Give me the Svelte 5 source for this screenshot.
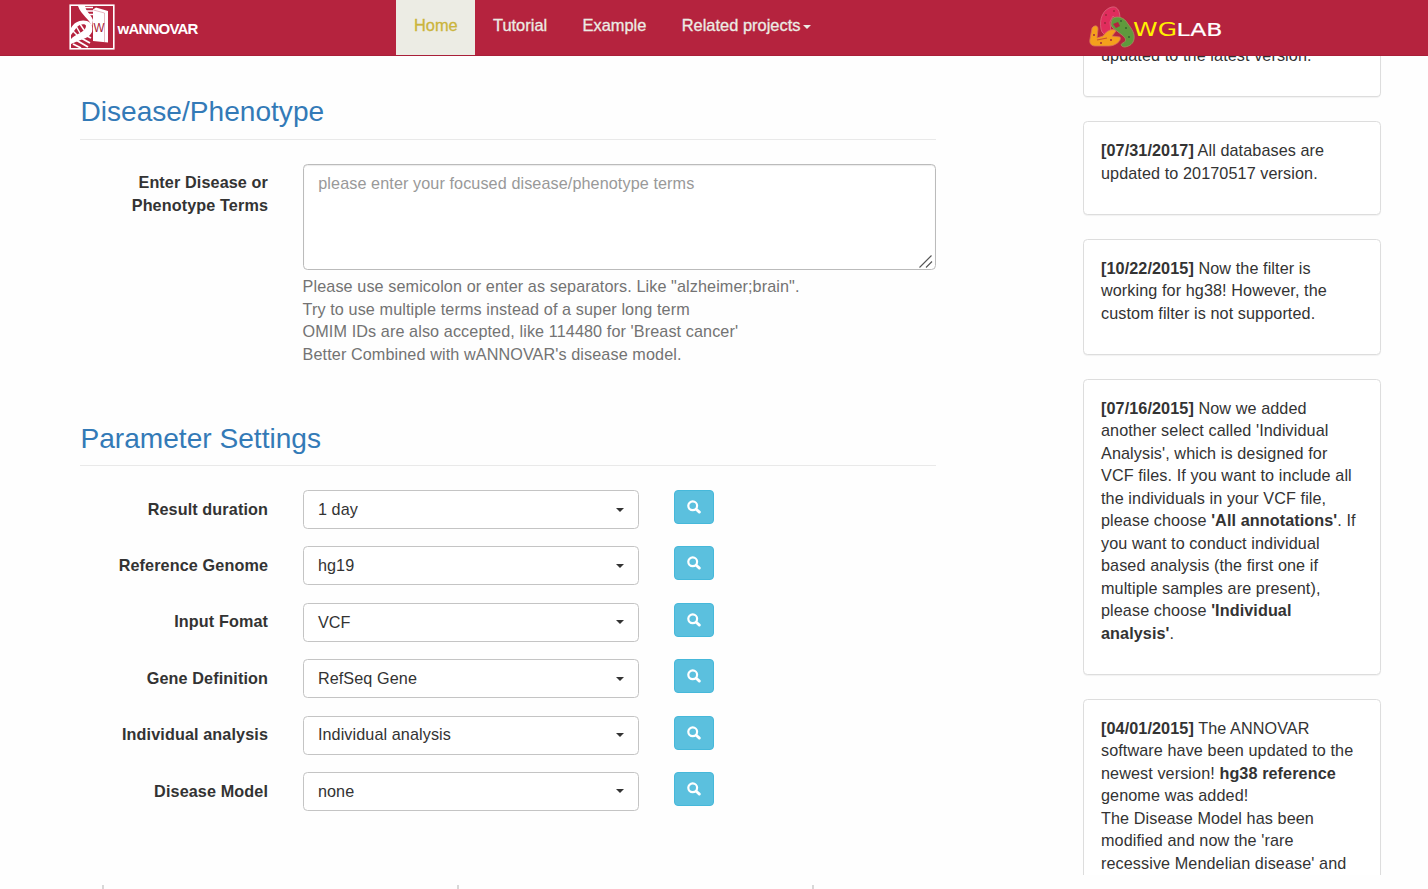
<script>
  const params = [
    { label: 'Result duration', value: '1 day' },
    { label: 'Reference Genome', value: 'hg19' },
    { label: 'Input Fomat', value: 'VCF' },
    { label: 'Gene Definition', value: 'RefSeq Gene' },
    { label: 'Individual analysis', value: 'Individual analysis' },
    { label: 'Disease Model', value: 'none' }
  ];
</script>

<div class="page">
  <nav>
    <a class="brand" href="#home" aria-label="wANNOVAR">
      <svg class="dna" width="46" height="46" viewBox="0 0 46 46">
        <rect x="1.2" y="1.2" width="43.6" height="43.6" fill="none" stroke="#fff" stroke-width="1.6" />
        <path d="M9 2h7c1 6 6 8 8 14l-1 7C21 15 12 11 9 2z" fill="#fff" />
        <path d="M13 3.5h11M15 7h9M18 10.5h6" stroke="#fff" stroke-width="1.4" />
        <path d="M2 24C5 18 12 15 18 17c5 2 6 6 5 11-3 6-9 7-14 9l-7 3v-5c4-5 15-7 15-13 0-3-7-2-9 1l-6 8z" fill="#fff" />
        <path d="M7 22l4 7M11 20l4 6M4 27l4 4" stroke="#fff" stroke-width="1.5" />
        <path d="M7 36l12 7M12 34l9 5M16 31l6 3M4 40l8 4" stroke="#fff" stroke-width="1.9" />
        <path d="M24 5.5l3-2 12 3.500v31.500l-15-1.500z" fill="#fff" />
        <path d="M24.5 6l11 3v29" fill="none" stroke="#d88a99" stroke-width=".6" />
        <text x="24.5" y="27.5" font-size="12" textLength="11" lengthAdjust="spacingAndGlyphs" fill="#a81b38">W</text>
      </svg>
      <span>wANNOVAR</span>
    </a>
    <ul>
      <li class="active">Home</li>
      <li>Tutorial</li>
      <li>Example</li>
      <li>Related projects<i class="caret"></i></li>
    </ul>
    <a class="lab" href="#lab" aria-label="WGLAB">
      <svg width="136" height="44" viewBox="0 0 136 44">
        <path d="M12 25C10 15 14 5 23 3c6-1 8 5 8 12l-3 1-4-4-3 6 1 11-6 2-3-3z" fill="#e02d5d" stroke="#dc6a80" stroke-width=".8" />
        <path d="M3 24c2-3 6-3 6 1l-1 9 6-2c4-6 10-8 13-5l-4 5 8 1c2 4-5 9-11 9H6c-4 0-6-3-5-7z" fill="#f4a01c" stroke="#d9715c" stroke-width=".8" />
        <path d="M8 36l10-2" stroke="#c9522c" stroke-width="1.2" />
        <path d="M24 14c5-2 11-1 15 6 4 5 7 10 6 15-1 5-4 7-9 8-4 0-5-3-2-4 4-2 3-5-1-8l-9-7c-3-2-2-7 0-10z" fill="#5f9a3d" stroke="#a68f62" stroke-width=".8" />
        <path d="M24 20l5-2 2 4-4 2z" fill="#b5233e" />
        <g fill="#9f293b"><circle cx="5" cy="31" r="1" /><circle cx="12" cy="39" r="1" /><circle cx="22" cy="36" r="1" /><circle cx="25" cy="7" r="1" /><circle cx="17" cy="11" r="1" /><circle cx="16" cy="19" r="1" /></g>
        <g fill="#35632f"><circle cx="32" cy="17" r="1" /><circle cx="37" cy="24" r="1" /><circle cx="40" cy="33" r="1" /></g>
        <text class="wide" x="44" y="31.5" font-size="20" textLength="44" lengthAdjust="spacingAndGlyphs" fill="#fff200">WG</text>
        <text class="wide" x="87.5" y="31.5" font-size="17" textLength="46" lengthAdjust="spacingAndGlyphs" fill="#fff" stroke="#fff" stroke-width=".2">LAB</text>
      </svg>
    </a>
  </nav>

  <div class="columns">
    <main>
      <section>
        <h2 class="top">Disease/Phenotype</h2>
        <div class="row terms">
          <div class="label">Enter Disease or<br />Phenotype Terms</div>
          <div class="field">
            <div class="textarea">
              please enter your focused disease/phenotype terms
              <svg class="grip" width="14" height="14" viewBox="0 0 14 14"><path d="M.5 13.5l12-12M7 13.5l6-6" stroke="#555" stroke-width="1.1" /></svg>
            </div>
            <p class="help">
              Please use semicolon or enter as separators. Like "alzheimer;brain".<br />
              Try to use multiple terms instead of a super long term<br />
              OMIM IDs are also accepted, like 114480 for 'Breast cancer'<br />
              Better Combined with wANNOVAR's disease model.
            </p>
          </div>
        </div>
      </section>
      <section class="settings">
        <h2>Parameter Settings</h2>
        <div class="params">
          {#each params as p}
            <div class="row param">
              <div class="label">{p.label}</div>
              <div class="select"><span>{p.value}</span><i class="caret"></i></div>
              <button aria-label="Details">
                <svg width="16" height="16" viewBox="0 0 16 16"><circle cx="6.7" cy="6.8" r="4.4" fill="none" stroke="#fff" stroke-width="2.2" /><path d="M10.2 10.2l3.2 2.9" stroke="#fff" stroke-width="2.8" stroke-linecap="round" /></svg>
              </button>
            </div>
          {/each}
        </div>
      </section>
      <div class="ticks"><i></i><i></i><i></i></div>
    </main>

    <aside>
      <article class="first">updated to the latest version.</article>
      <article><b>[07/31/2017]</b> All databases are<br />updated to 20170517 version.</article>
      <article><b>[10/22/2015]</b> Now the filter is<br />working for hg38! However, the<br />custom filter is not supported.</article>
      <article>
        <b>[07/16/2015]</b> Now we added<br />another select called 'Individual<br />Analysis', which is designed for<br />VCF files. If you want to include all<br />the individuals in your VCF file,<br />please choose <b>'All annotations'</b>. If<br />you want to conduct individual<br />based analysis (the first one if<br />multiple samples are present),<br />please choose <b>'Individual<br />analysis'</b>.
      </article>
      <article class="last">
        <b>[04/01/2015]</b> The ANNOVAR<br />software have been updated to the<br />newest version! <b>hg38 reference</b><br />genome was added!<br />The Disease Model has been<br />modified and now the 'rare<br />recessive Mendelian disease' and
      </article>
    </aside>
  </div>
</div>

<style>
  :global(body) { background: #fefefe; overflow: hidden; }
  .page, .page * { box-sizing: border-box; }
  .page {
    height: 889px; overflow: hidden; display: flex; flex-direction: column;
    font: 16.2px/22.5px "Liberation Sans", Arial, sans-serif; color: #333; background: #fefefe;
    white-space: nowrap; letter-spacing: .09px;
  }
  svg { letter-spacing: 0; }
  nav {
    height: 56px; flex: none; background: #b5233e; display: grid;
    grid-template-columns: 396px 693px 1fr; border-bottom: 1px solid #a91f38;
  }
  .brand { display: flex; align-items: flex-start; padding: 4px 0 0 69px; color: #fff; text-decoration: none; gap: 2.5px; font-weight: 700; font-size: 15px; }
  .brand span { padding-top: 14px; letter-spacing: -.78px; }
  .brand text { font-weight: 400; }
  ul { display: flex; margin: 0; padding: 0; list-style: none; height: 55px; }
  li { padding: 14px 17.4px 0 17.9px; color: #ecece4; font-size: 16.4px; letter-spacing: .02px; -webkit-text-stroke: .3px currentColor; }
  .active { background: #ecece4; color: #cbb43b; }
  .caret { display: inline-block; border: 4.8px solid transparent; border-top-color: currentColor; border-bottom: 0; }
  li .caret { margin-left: 2.5px; border-width: 4.5px 4.5px 0; vertical-align: 2px; }
  .lab { padding-top: 4px; }
  .lab svg { display: block; }
  .wide { font-family: "DejaVu Sans", sans-serif; }
  .columns { display: grid; grid-template-columns: 1082.5px 299px; height: 833px; }
  main { padding: 39px 146.5px 0 80px; display: flex; flex-direction: column; }
  h2 { margin: 0; height: 45px; border-bottom: 1px solid #e9e9e9; font-size: 28.1px; line-height: 35px; font-weight: 400; color: #337ab7; letter-spacing: 0; padding-left: .5px; }
  .top { line-height: 34px; }
  .row { display: grid; grid-template-columns: 188px 1fr; column-gap: 34.6px; }
  .terms { margin-top: 24px; }
  .label { text-align: right; font-weight: 700; padding-top: 7px; letter-spacing: .11px; }
  .textarea { height: 106px; border: 1px solid #bbb; border-radius: 4.5px; padding: 6.5px 14.7px; color: #999; background: #fff; position: relative; box-shadow: inset 0 1px 1px rgba(0,0,0,.08); }
  .grip { position: absolute; right: 2px; bottom: 1px; }
  .help { margin: 5px 0 0; color: #737373; letter-spacing: .1px; }
  .settings { margin-top: 56px; }
  .params { margin-top: 24px; }
  .param { grid-template-columns: 188px 336px 40px; column-gap: 34.9px; height: 56.4px; }
  .param .label { padding-top: 7.6px; }
  .select { height: 39px; border: 1px solid #c4c4c4; border-radius: 4.5px; background: #fff; padding: 0 14px; display: flex; justify-content: space-between; align-items: center; }
  .select span { padding-bottom: .8px; }
  button { width: 40px; height: 34px; border: 1px solid #46b8da; border-radius: 4px; background: #5bc0de; padding: 0; display: grid; place-items: center; }
  .ticks { display: flex; gap: 353px; margin: auto 0 0 22px; height: 4px; }
  .ticks i { width: 2px; height: 4px; background: #d8d8d8; flex: none; }
  aside { display: flex; flex-direction: column; gap: 24px; height: 819px; overflow: hidden; width: 300px; }
  article { width: 298.5px; flex: none; border: 1px solid #ddd; border-radius: 4.5px; padding: 16.9px 17.5px 29.6px; background: #fff; box-shadow: 0 1px 1px rgba(0,0,0,.05); }
  .first { border-top: 0; border-radius: 0 0 4.5px 4.5px; height: 41.3px; padding-top: 0; display: flex; align-items: flex-end; padding-bottom: 29.8px; }
  .last { padding-bottom: 60px; }
</style>
